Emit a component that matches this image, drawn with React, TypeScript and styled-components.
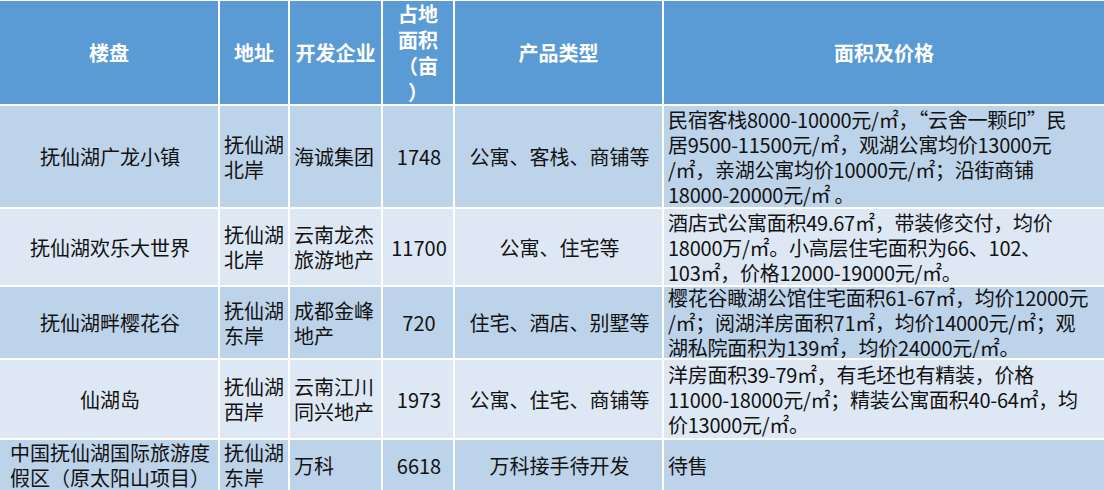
import React from "react";
import styled, { createGlobalStyle } from "styled-components";

const GlobalStyle = createGlobalStyle`
  html, body {
    margin: 0;
    padding: 0;
    background: #ffffff;
    overflow: hidden;
  }
  body {
    font-family: "Noto Sans CJK SC", "Noto Sans", sans-serif;
  }
`;

const Table = styled.div`
  width: 1104px;
  height: 490px;
  box-sizing: border-box;
  padding-top: 1px;
  display: grid;
  grid-template-columns: 218px 68px 91px 70px 207px 1fr;
  grid-template-rows: 103px 101px 76px 71px 78px 50px;
  column-gap: 2px;
  row-gap: 2px;
  background: #ffffff;
  overflow: hidden;
`;

const HeaderCell = styled.div`
  background: #5b9bd5;
  color: #ffffff;
  font-weight: 700;
  font-size: 20px;
  line-height: 26px;
  display: flex;
  align-items: center;
  justify-content: center;
  text-align: center;
  white-space: nowrap;
`;

type Tone = "odd" | "even";
type Align = "center" | "left";

const Cell = styled.div<{ $tone: Tone; $align: Align }>`
  background: ${(p) => (p.$tone === "odd" ? "#bdd3ea" : "#dee8f4")};
  color: #121212;
  font-size: 20px;
  line-height: 25px;
  display: flex;
  align-items: center;
  justify-content: ${(p) => (p.$align === "center" ? "center" : "flex-start")};
  text-align: ${(p) => p.$align};
  padding: 0 2px 0 4px;
  white-space: nowrap;
  overflow: hidden;
`;

const PriceCell = styled(Cell)`
  padding: 0 0 0 4px;
  letter-spacing: -0.25px;
`;

const Lines: React.FC<{ lines: string[] }> = ({ lines }) => (
  <div>
    {lines.map((l, i) => (
      <React.Fragment key={i}>
        {i > 0 && <br />}
        {l}
      </React.Fragment>
    ))}
  </div>
);

type Row = {
  name: string[];
  addr: string[];
  dev: string[];
  area: string;
  type: string;
  price: string[];
};

const rows: Row[] = [
  {
    name: ["抚仙湖广龙小镇"],
    addr: ["抚仙湖", "北岸"],
    dev: ["海诚集团"],
    area: "1748",
    type: "公寓、客栈、商铺等",
    price: [
      "民宿客栈8000-10000元/㎡，“云舍一颗印”民",
      "居9500-11500元/㎡，观湖公寓均价13000元",
      "/㎡，亲湖公寓均价10000元/㎡；沿街商铺",
      "18000-20000元/㎡ 。",
    ],
  },
  {
    name: ["抚仙湖欢乐大世界"],
    addr: ["抚仙湖", "北岸"],
    dev: ["云南龙杰", "旅游地产"],
    area: "11700",
    type: "公寓、住宅等",
    price: [
      "酒店式公寓面积49.67㎡，带装修交付，均价",
      "18000万/㎡。小高层住宅面积为66、102、",
      "103㎡，价格12000-19000元/㎡。",
    ],
  },
  {
    name: ["抚仙湖畔樱花谷"],
    addr: ["抚仙湖", "东岸"],
    dev: ["成都金峰", "地产"],
    area: "720",
    type: "住宅、酒店、别墅等",
    price: [
      "樱花谷瞰湖公馆住宅面积61-67㎡，均价12000元",
      "/㎡；阅湖洋房面积71㎡，均价14000元/㎡；观",
      "湖私院面积为139㎡，均价24000元/㎡。",
    ],
  },
  {
    name: ["仙湖岛"],
    addr: ["抚仙湖", "西岸"],
    dev: ["云南江川", "同兴地产"],
    area: "1973",
    type: "公寓、住宅、商铺等",
    price: [
      "洋房面积39-79㎡，有毛坯也有精装，价格",
      "11000-18000元/㎡；精装公寓面积40-64㎡，均",
      "价13000元/㎡。",
    ],
  },
  {
    name: ["中国抚仙湖国际旅游度", "假区（原太阳山项目）"],
    addr: ["抚仙湖", "东岸"],
    dev: ["万科"],
    area: "6618",
    type: "万科接手待开发",
    price: ["待售"],
  },
];

export default function App() {
  return (
    <>
      <GlobalStyle />
      <Table>
        <HeaderCell>楼盘</HeaderCell>
        <HeaderCell>地址</HeaderCell>
        <HeaderCell>开发企业</HeaderCell>
        <HeaderCell>
          <Lines lines={["占地", "面积", "（亩", "）"]} />
        </HeaderCell>
        <HeaderCell>产品类型</HeaderCell>
        <HeaderCell>面积及价格</HeaderCell>
        {rows.map((r, i) => {
          const tone: Tone = i % 2 === 0 ? "odd" : "even";
          return (
            <React.Fragment key={i}>
              <Cell $tone={tone} $align="center">
                <Lines lines={r.name} />
              </Cell>
              <Cell $tone={tone} $align="left">
                <Lines lines={r.addr} />
              </Cell>
              <Cell $tone={tone} $align="left">
                <Lines lines={r.dev} />
              </Cell>
              <Cell $tone={tone} $align="center">
                {r.area}
              </Cell>
              <Cell $tone={tone} $align="center">
                {r.type}
              </Cell>
              <PriceCell $tone={tone} $align="left">
                <Lines lines={r.price} />
              </PriceCell>
            </React.Fragment>
          );
        })}
      </Table>
    </>
  );
}
